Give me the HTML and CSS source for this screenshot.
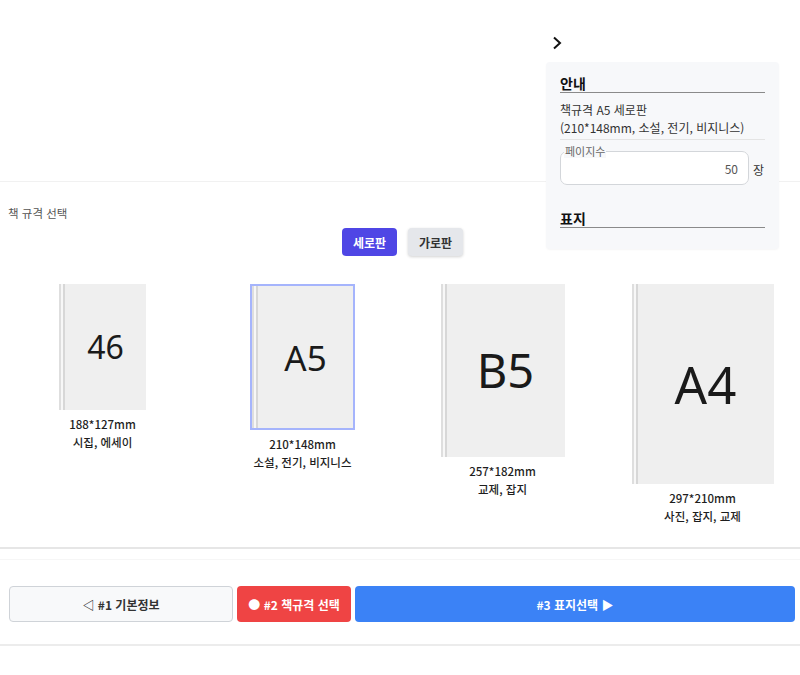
FILE: index.html
```html
<!DOCTYPE html>
<html lang="ko">
<head>
<meta charset="utf-8">
<title>책 규격 선택</title>
<link rel="stylesheet" href="styles.css">
</head>
<body>
<div class="page">
  <header class="top"></header>

  <section class="spec-section">
    <div class="section-label">책 규격 선택</div>
    <div class="orient">
      <button class="orient-btn active">세로판</button>
      <button class="orient-btn">가로판</button>
    </div>

    <div class="books">
      <div class="spec">
        <div class="book b46"><span class="book-name n46">46</span></div>
        <div class="spec-label">188*127mm<br>시집, 에세이</div>
      </div>
      <div class="spec">
        <div class="book a5 selected"><span class="book-name na5">A5</span></div>
        <div class="spec-label">210*148mm<br>소설, 전기, 비지니스</div>
      </div>
      <div class="spec">
        <div class="book b5"><span class="book-name nb5">B5</span></div>
        <div class="spec-label">257*182mm<br>교제, 잡지</div>
      </div>
      <div class="spec">
        <div class="book a4"><span class="book-name na4">A4</span></div>
        <div class="spec-label">297*210mm<br>사진, 잡지, 교제</div>
      </div>
    </div>
  </section>

  <div class="divider"></div>

  <nav class="steps">
    <button class="step step-prev">◁ #1 기본정보</button>
    <button class="step step-cur">● #2 책규격 선택</button>
    <button class="step step-next">#3 표지선택 ▶</button>
  </nav>

  <aside class="side">
    <svg class="chev" width="12" height="14" viewBox="0 0 12 14"><path d="M3 1.5 L9 7 L3 12.5" fill="none" stroke="#111" stroke-width="2"/></svg>
    <div class="panel">
      <h3 class="panel-title">안내</h3>
      <p class="panel-desc">책규격 A5 세로판<br>(210*148mm, 소설, 전기, 비지니스)</p>
      <div class="pages-row">
        <fieldset class="pages">
          <legend>페이지수</legend>
          <div class="pages-val">50</div>
        </fieldset>
        <span class="unit">장</span>
      </div>
      <h3 class="panel-title cover">표지</h3>
    </div>
  </aside>
</div>
</body>
</html>
```

FILE: styles.css
```css
* { box-sizing: border-box; }
html, body { margin: 0; padding: 0; background: #fff; }
body {
  font-family: "Noto Sans CJK KR", "Noto Sans", sans-serif;
  color: #222;
  width: 800px;
  overflow: hidden;
}
.page { position: relative; width: 800px; }

.top {
  height: 182px;
  border-bottom: 1px solid #f1f1f1;
}

.spec-section { padding-top: 23px; }
.section-label {
  padding-left: 8px;
  font-size: 11.5px;
  line-height: 16px;
  color: #555;
}
.orient {
  display: flex;
  justify-content: center;
  gap: 11px;
  margin-top: 7px;
  padding-left: 5px;
}
.orient-btn {
  width: 55px;
  height: 28px;
  border: none;
  border-radius: 4px;
  font-family: "Noto Sans CJK KR", sans-serif;
  font-size: 12px;
  font-weight: 700;
  padding: 0;
  background: #e5e7eb;
  color: #333;
  box-shadow: 0 1px 3px rgba(0,0,0,0.18);
}
.orient-btn.active {
  background: #4f46e5;
  color: #fff;
  box-shadow: none;
}

.books {
  display: grid;
  grid-template-columns: repeat(4, 1fr);
  align-items: start;
  margin-top: 28px;
  padding-bottom: 22px;
}
.spec {
  display: flex;
  flex-direction: column;
  align-items: center;
  padding-left: 5px;
}
.book {
  display: flex;
  align-items: center;
  justify-content: center;
  padding-left: 6px;
  background: linear-gradient(to right, #dedede 0, #dedede 2px, #f7f7f7 2px, #f7f7f7 4px, #d7d7d7 4px, #d7d7d7 6px, #efefef 6px);
}
.b46 { width: 87px; height: 126px; }
.a5 { width: 105px; height: 146px; }
.a5.selected { border: 2px solid #a5b4fc; }
.b5 { width: 124px; height: 173px; }
.a4 { width: 142px; height: 200px; }
.book-name {
  font-family: "Noto Sans", sans-serif;
  font-weight: 400;
  color: #1a1a1a;
  line-height: 1;
}
.n46 { font-size: 32px; }
.na5 { font-size: 35px; }
.nb5 { font-size: 47px; }
.na4 { font-size: 51px; }
.spec-label {
  margin-top: 5px;
  font-size: 11.5px;
  line-height: 18px;
  text-align: center;
  color: #1e1e1e;
  font-weight: 500;
}

.divider {
  border-top: 2px solid #e6e6e6;
}

.steps {
  display: flex;
  gap: 4px;
  margin-top: 10px;
  padding: 26px 0 22px 9px;
  border-top: 1px solid #f6f6f6;
  border-bottom: 2px solid #ececec;
}
.step {
  height: 36px;
  border: none;
  border-radius: 4px;
  font-family: "Noto Sans CJK KR", sans-serif;
  font-size: 12px;
  font-weight: 700;
  padding: 0;
  color: #fff;
}
.step-prev {
  width: 224px;
  background: #f8f9fa;
  border: 1px solid #cfd3d8;
  color: #333;
}
.step-cur { width: 114px; background: #ef4444; }
.step-next { width: 440px; background: #3b82f6; }

.side {
  position: absolute;
  left: 546px;
  top: 36px;
  width: 233px;
}
.chev { display: block; margin-left: 5px; }
.panel {
  margin-top: 12px;
  background: #f7f8fa;
  border-radius: 4px;
  padding: 12px 14px 21px 14px;
  box-shadow: 0 1px 2px rgba(0,0,0,0.04);
}
.panel-title {
  margin: 0;
  font-size: 14px;
  font-weight: 700;
  line-height: 18px;
  color: #111;
  border-bottom: 1px solid #8a8a8a;
}
.panel-title.cover { margin-top: 24px; }
.panel-desc {
  margin: 8px 0 0 0;
  font-size: 12px;
  line-height: 18px;
  color: #333;
  padding-bottom: 2px;
  border-bottom: 1px solid #e4e4e4;
}
.pages-row {
  display: flex;
  align-items: center;
  gap: 4px;
  margin-top: 5px;
}
.pages {
  margin: 0;
  width: 189px;
  padding: 0 10px 0 3px;
  border: 1px solid #d3d6da;
  border-radius: 7px;
  background: #fff;
  min-width: 0;
}
.pages legend {
  padding: 0 1px;
  font-size: 11px;
  line-height: 13px;
  color: #666;
  background: #f7f8fa;
}
.pages-val {
  padding: 2px 0 6px;
  text-align: right;
  font-size: 12px;
  line-height: 18px;
  color: #555;
}
.unit {
  font-size: 12px;
  color: #333;
  padding-top: 8px;
}
```
